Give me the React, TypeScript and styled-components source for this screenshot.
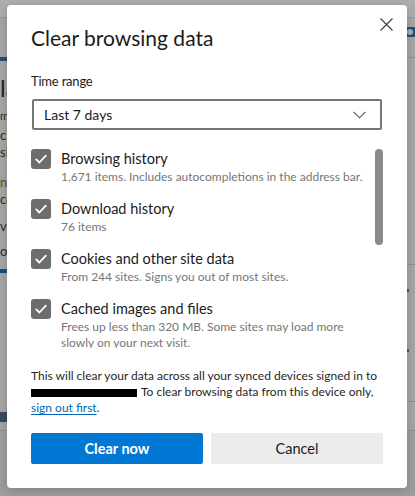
import React from "react";
import styled, { createGlobalStyle } from "styled-components";

const GlobalStyle = createGlobalStyle`
  html, body { margin: 0; padding: 0; }
  body { font-family: "Segoe UI", Lato, "Liberation Sans", sans-serif; }
  * { box-sizing: border-box; }
`;

const Stage = styled.div`
  position: relative;
  width: 415px;
  height: 496px;
  overflow: hidden;
  background: #a5a5a5;
`;

/* ---------- dimmed page underneath ---------- */
const UnderPage = styled.div`
  display: flex;
  flex-direction: column;
  width: 100%;
  height: 100%;
`;

const UnderTop = styled.div`
  height: 18px;
  background: #adadad;
  border-bottom: 1px solid #999;
`;

const UnderMain = styled.div`
  display: flex;
  flex: 1;
`;

const UnderBottom = styled.div`
  height: 66px;
  background: #9d9d9d;
  border-top: 1px solid #8f8f8f;
`;

const SideStrip = styled.div<{ $w: number }>`
  width: ${(p) => p.$w}px;
  overflow: hidden;
  display: flex;
  flex-direction: column;
`;

const Spacer = styled.div`
  flex: 1;
`;

const Bar = styled.div<{ $top: number; $h: number; $c: string; $w?: number }>`
  margin-top: ${(p) => p.$top}px;
  height: ${(p) => p.$h}px;
  width: ${(p) => (p.$w ? `${p.$w}px` : "auto")};
  background: ${(p) => p.$c};
  flex-shrink: 0;
  display: flex;
  align-items: center;
`;

const Knob = styled.div`
  width: 6px;
  height: 6px;
  border-radius: 50%;
  background: #a8a8a8;
`;

const Frag = styled.div<{ $top: number; $size: number; $c?: string }>`
  margin-top: ${(p) => p.$top}px;
  font-size: ${(p) => p.$size}px;
  line-height: ${(p) => p.$size + 2}px;
  color: ${(p) => p.$c || "#2c2c2c"};
  white-space: nowrap;
  flex-shrink: 0;
`;

/* ---------- dialog ---------- */
const Dialog = styled.div`
  position: absolute;
  left: 7px;
  top: 5px;
  width: 400px;
  height: 483px;
  background: #ffffff;
  border-radius: 4px;
  box-shadow: 0 2px 10px rgba(0, 0, 0, 0.18);
  padding: 19px 24px 24px;
  display: flex;
  flex-direction: column;
  color: #1b1b1b;
`;

const CloseButton = styled.button`
  position: absolute;
  top: 12px;
  right: 13px;
  width: 15px;
  height: 15px;
  padding: 0;
  border: none;
  background: transparent;
  display: flex;
  align-items: center;
  justify-content: center;
`;

const Title = styled.h1`
  margin: 0;
  font-size: 21px;
  line-height: 28px;
  font-weight: 400;
  color: #1b1b1b;
`;

const FieldLabel = styled.div`
  margin-top: 19px;
  font-size: 13px;
  letter-spacing: -0.2px;
  line-height: 20px;
  color: #1b1b1b;
`;

const Select = styled.div`
  margin: 8px 1px 0;
  height: 31px;
  border: 2px solid #777;
  border-radius: 2px;
  display: flex;
  align-items: center;
  justify-content: space-between;
  padding: 0 14px 0 10px;
  font-size: 14px;
  color: #1b1b1b;
`;

const ScrollArea = styled.div`
  margin-top: 10px;
  height: 208px;
  display: flex;
  overflow: hidden;
`;

const List = styled.div`
  flex: 1;
  padding-top: 9px;
  display: flex;
  flex-direction: column;
  gap: 14px;
`;

const Track = styled.div`
  width: 8px;
  padding-top: 9px;
`;

const Thumb = styled.div`
  width: 8px;
  height: 96px;
  border-radius: 4px;
  background: #8a8a8a;
`;

const Item = styled.div`
  display: flex;
  gap: 10px;
`;

const Box = styled.div`
  width: 20px;
  height: 20px;
  border-radius: 3px;
  background: #6d6d6d;
  flex-shrink: 0;
  display: flex;
  align-items: center;
  justify-content: center;
`;

const ItemText = styled.div`
  display: flex;
  flex-direction: column;
  max-width: 306px;
`;

const ItemTitle = styled.div`
  font-size: 14.5px;
  line-height: 20px;
  color: #1b1b1b;
`;

const ItemSub = styled.div`
  font-size: 12px;
  line-height: 16px;
  color: #767676;
`;

const Notice = styled.p`
  margin: 20px 0 0;
  font-size: 12px;
  line-height: 16px;
  color: #1f1f1f;
`;

const Redacted = styled.span`
  display: inline-block;
  width: 106px;
  height: 8px;
  background: #000;
  vertical-align: -1px;
  margin-right: 4px;
`;

const Link = styled.a`
  color: #0067b8;
  text-decoration: underline;
  text-underline-offset: 2px;
`;

const Buttons = styled.div`
  margin-top: auto;
  display: grid;
  grid-template-columns: 1fr 1fr;
  gap: 8px;
`;

const Button = styled.button<{ $primary?: boolean }>`
  height: 31px;
  border: none;
  border-radius: 2px;
  font-family: inherit;
  font-size: 14.5px;
  font-weight: ${(p) => (p.$primary ? 700 : 400)};
  background: ${(p) => (p.$primary ? "#0078d4" : "#ececec")};
  color: ${(p) => (p.$primary ? "#ffffff" : "#1b1b1b")};
`;

const Check = () => (
  <svg width="14" height="14" viewBox="0 0 14 14" fill="none">
    <path d="M2.2 7.4 L5.4 10.5 L11.8 3.6" stroke="#fff" strokeWidth="1.8" strokeLinecap="round" strokeLinejoin="round" />
  </svg>
);

const items = [
  { title: "Browsing history", sub: "1,671 items. Includes autocompletions in the address bar." },
  { title: "Download history", sub: "76 items" },
  { title: "Cookies and other site data", sub: "From 244 sites. Signs you out of most sites." },
  { title: "Cached images and files", sub: "Frees up less than 320 MB. Some sites may load more slowly on your next visit." },
];

export default function App() {
  return (
    <>
      <GlobalStyle />
      <Stage>
        <UnderPage>
          <UnderTop />
          <UnderMain>
            <SideStrip $w={7}>
              <Bar $top={39} $h={4} $c="#1d4f7c" />
              <Frag $top={14} $size={24} $c="#262626">la</Frag>
              <Frag $top={8} $size={11}>m</Frag>
              <Frag $top={6} $size={13}>ck</Frag>
              <Frag $top={2} $size={13}>si</Frag>
              <Frag $top={15} $size={13} $c="#6a4a20">ne</Frag>
              <Frag $top={2} $size={13}>ce</Frag>
              <Frag $top={12} $size={13}>vo</Frag>
              <Frag $top={10} $size={13}>ow</Frag>
              <Bar $top={10} $h={4} $c="#1d4f7c" />
              <Bar $top={139} $h={10} $c="#3b4a5a" />
            </SideStrip>
            <Spacer />
            <SideStrip $w={8}>
              <Bar $top={9} $h={10} $c="#1d4f7c">
                <Knob />
              </Bar>
              <Bar $top={20} $h={1} $c="#8f8f8f" />
              <Bar $top={206} $h={1} $c="#8f8f8f" />
              <Bar $top={24} $h={3} $c="#555" $w={2} />
              <Bar $top={57} $h={3} $c="#555" $w={2} />
              <Bar $top={49} $h={1} $c="#8a8a8a" />
            </SideStrip>
          </UnderMain>
          <UnderBottom />
        </UnderPage>

        <Dialog role="dialog" aria-label="Clear browsing data">
          <CloseButton aria-label="Close">
            <svg width="13" height="13" viewBox="0 0 13 13">
              <path d="M0.5 0.5 L12.5 12.5 M12.5 0.5 L0.5 12.5" stroke="#3a3a3a" strokeWidth="1.1" />
            </svg>
          </CloseButton>
          <Title>Clear browsing data</Title>
          <FieldLabel>Time range</FieldLabel>
          <Select>
            <span>Last 7 days</span>
            <svg width="13" height="8" viewBox="0 0 13 8" fill="none">
              <path d="M0.5 0.8 L6.5 6.8 L12.5 0.8" stroke="#555" strokeWidth="1.1" />
            </svg>
          </Select>
          <ScrollArea>
            <List>
              {items.map((it) => (
                <Item key={it.title}>
                  <Box>
                    <Check />
                  </Box>
                  <ItemText>
                    <ItemTitle>{it.title}</ItemTitle>
                    <ItemSub>{it.sub}</ItemSub>
                  </ItemText>
                </Item>
              ))}
            </List>
            <Track>
              <Thumb />
            </Track>
          </ScrollArea>
          <Notice>
            This will clear your data across all your synced devices signed in to <Redacted />
            To clear browsing data from this device only, <Link href="#">sign out first</Link>.
          </Notice>
          <Buttons>
            <Button $primary>Clear now</Button>
            <Button>Cancel</Button>
          </Buttons>
        </Dialog>
      </Stage>
    </>
  );
}
